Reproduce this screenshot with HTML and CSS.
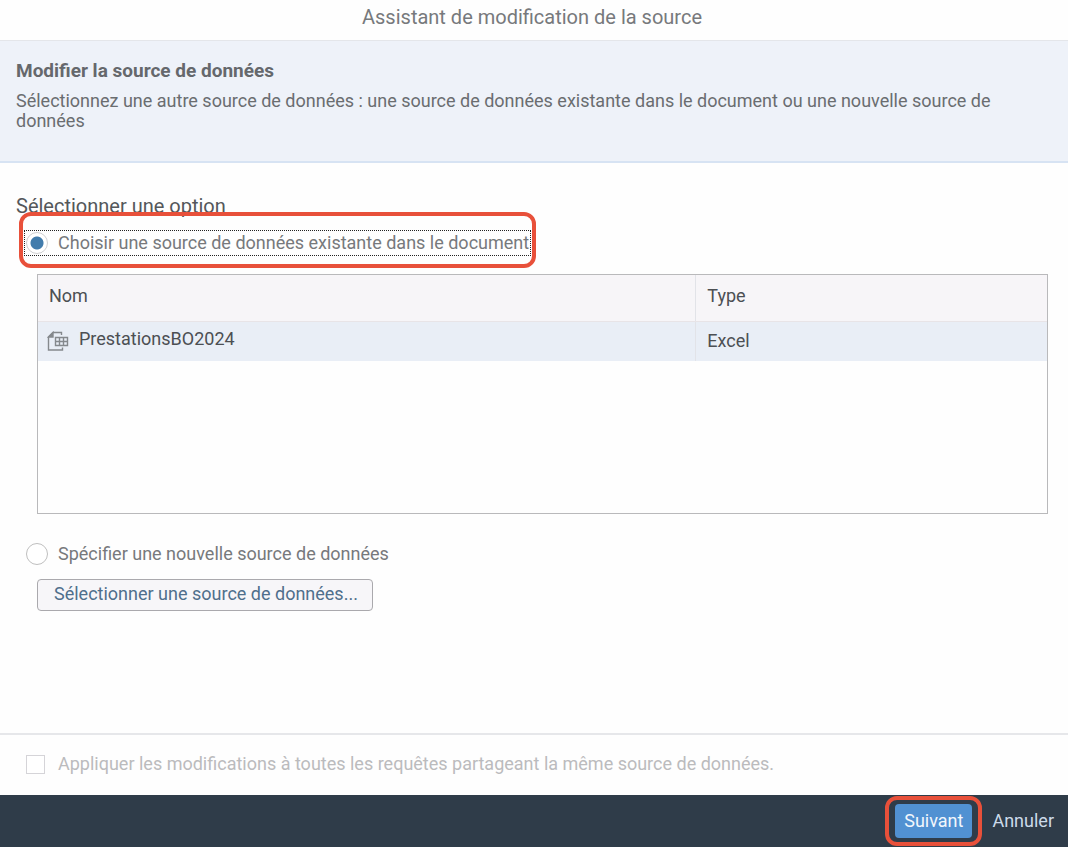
FILE: index.html
```html
<!DOCTYPE html>
<html lang="fr">
<head>
  <meta charset="UTF-8">
  <title>Assistant de modification de la source</title>
  <meta name="viewport" content="width=device-width, initial-scale=1">
  <link rel="stylesheet" href="styles.css">
</head>
<body>
  <form class="wizard">
    <header class="wizard-header">
      <h1>Assistant de modification de la source</h1>
    </header>

    <section class="intro">
      <h2>Modifier la source de données</h2>
      <p>Sélectionnez une autre source de données : une source de données existante dans le document ou une nouvelle source de données</p>
    </section>

    <main class="options">
      <h3>Sélectionner une option</h3>

      <label class="option focused highlight">
        <input type="radio" name="source" value="existing" checked>
        <span>Choisir une source de données existante dans le document</span>
      </label>

      <div class="source-list">
        <table>
          <thead>
            <tr>
              <th class="col-name">Nom</th>
              <th>Type</th>
            </tr>
          </thead>
          <tbody>
            <tr>
              <td class="col-name">
                <div class="source-name">
                  <svg class="source-icon" width="22" height="20" viewBox="0 0 22 20" fill="none" stroke="#85898d" stroke-width="1.4">
                    <path d="M14.5 4V1.5H6L1.500 6v13H15.500v-2.500"/>
                    <path d="M6 1.500V6H1.500z" fill="#85898d"/>
                    <path d="M8.500 6.500h12v8h-12zM8.500 10.500h12M12.500 6.500v8M16.500 6.500v8"/>
                  </svg>
                  <span>PrestationsBO2024</span>
                </div>
              </td>
              <td>Excel</td>
            </tr>
          </tbody>
        </table>
      </div>

      <label class="option">
        <input type="radio" name="source" value="new">
        <span>Spécifier une nouvelle source de données</span>
      </label>
      <button type="button" class="select-source">Sélectionner une source de données...</button>
    </main>

    <div class="apply-all">
      <label>
        <input type="checkbox" name="apply-all" disabled>
        <span>Appliquer les modifications à toutes les requêtes partageant la même source de données.</span>
      </label>
    </div>

    <footer class="actions">
      <span class="highlight">
        <button type="button" class="next">Suivant</button>
      </span>
      <button type="button" class="cancel">Annuler</button>
    </footer>
  </form>
</body>
</html>
```
FILE: styles.css
```css
* { box-sizing: border-box; margin: 0; padding: 0; }
body {
  font-family: Roboto, "Liberation Sans", sans-serif;
  font-size: 18px;
  line-height: 20px;
  color: #6a6d70;
  background: #fefefe;
}
button, input { font: inherit; }
.wizard {
  display: flex;
  flex-direction: column;
  min-height: 100vh;
}

.wizard-header {
  padding: 7px 20px 13px 16px;
  border-bottom: 1px solid #e4e6ea;
}
.wizard-header h1 {
  font-size: 20px;
  font-weight: 400;
  text-align: center;
  color: #77797c;
}

.intro {
  min-height: 122px;
  padding: 20px 60px 20px 16px;
  background: #eef2f9;
  border-bottom: 2px solid #d7e3f3;
}
.intro h2 {
  margin-bottom: 10px;
  font-size: 19px;
  font-weight: 700;
  color: #65686c;
}

.options {
  flex: 1;
  display: flex;
  flex-direction: column;
  align-items: flex-start;
  padding: 33px 20px 32px 16px;
}
.options h3 {
  margin-bottom: 14px;
  font-size: 20px;
  font-weight: 400;
  color: #54575a;
}
.option {
  display: flex;
  align-items: center;
  gap: 10px;
  margin-left: 8px;
  padding: 2px 1px 2px 2px;
  border: 1px dotted transparent;
  color: #77797c;
  cursor: pointer;
}
.option.focused { border-color: #222; }
.option input {
  appearance: none;
  width: 22px;
  height: 22px;
  margin: -1px 0 -1px -1px;
  border: 1px solid #bfbfbf;
  border-radius: 50%;
  background: #fff;
}
.option input:checked {
  border-color: #d0d0d2;
  background: radial-gradient(circle, #427cac 6px, #fff 7px);
}

/* red callout frame drawn over the neighbouring content */
.highlight { position: relative; }
.highlight::after {
  content: "";
  position: absolute;
  inset: -19px -6px -13px;
  border: 4px solid #e8503a;
  border-radius: 12px;
  pointer-events: none;
}

.source-list {
  align-self: stretch;
  min-height: 240px;
  margin: 18px 0 27px 21px;
  border: 1px solid #b9b9bb;
}
.source-list table {
  width: 100%;
  table-layout: fixed;
  border-collapse: collapse;
}
.source-list th,
.source-list td {
  padding: 0 11px;
  text-align: left;
  color: #4c4f53;
}
.source-list th {
  height: 46px;
  padding-bottom: 4px;
  font-weight: 400;
  background: #f7f5f8;
  border-bottom: 1px solid #e8e4e7;
}
.source-list td {
  height: 40px;
  background: #e9eef6;
}
.source-list .col-name {
  width: 65.2%;
  border-right: 1px solid #e2e3e8;
}
.source-name {
  display: flex;
  align-items: flex-start;
  gap: 10px;
  margin-left: -2px;
}
.source-name span { line-height: 16px; }

.select-source {
  margin: 12px 0 0 21px;
  padding: 4px 14px 6px 16px;
  border: 1px solid #aaa9ad;
  border-radius: 4px;
  background: #f7f6f9;
  color: #4f6f8c;
  cursor: pointer;
}

.apply-all {
  padding: 19px 26px 21px;
  border-top: 2px solid #e6e7ea;
}
.apply-all label {
  display: flex;
  align-items: center;
  gap: 13px;
  color: #bbbbbd;
}
.apply-all input {
  appearance: none;
  width: 19px;
  height: 19px;
  border: 1px solid #d5d4d8;
  background: #fff;
}

.actions {
  display: flex;
  justify-content: flex-end;
  align-items: center;
  height: 52px;
  padding: 0 8px;
  background: #2f3c49;
}
.actions button {
  height: 34px;
  border: none;
  border-radius: 4px;
  cursor: pointer;
}
.actions .highlight { margin-right: 14px; }
.actions .highlight::after { inset: -8px -10px; }
.next {
  padding: 0 9px;
  background: #5191d2;
  color: #f2f7fc;
}
.cancel {
  padding: 0 6px;
  background: transparent;
  color: #ccdbea;
}
```
